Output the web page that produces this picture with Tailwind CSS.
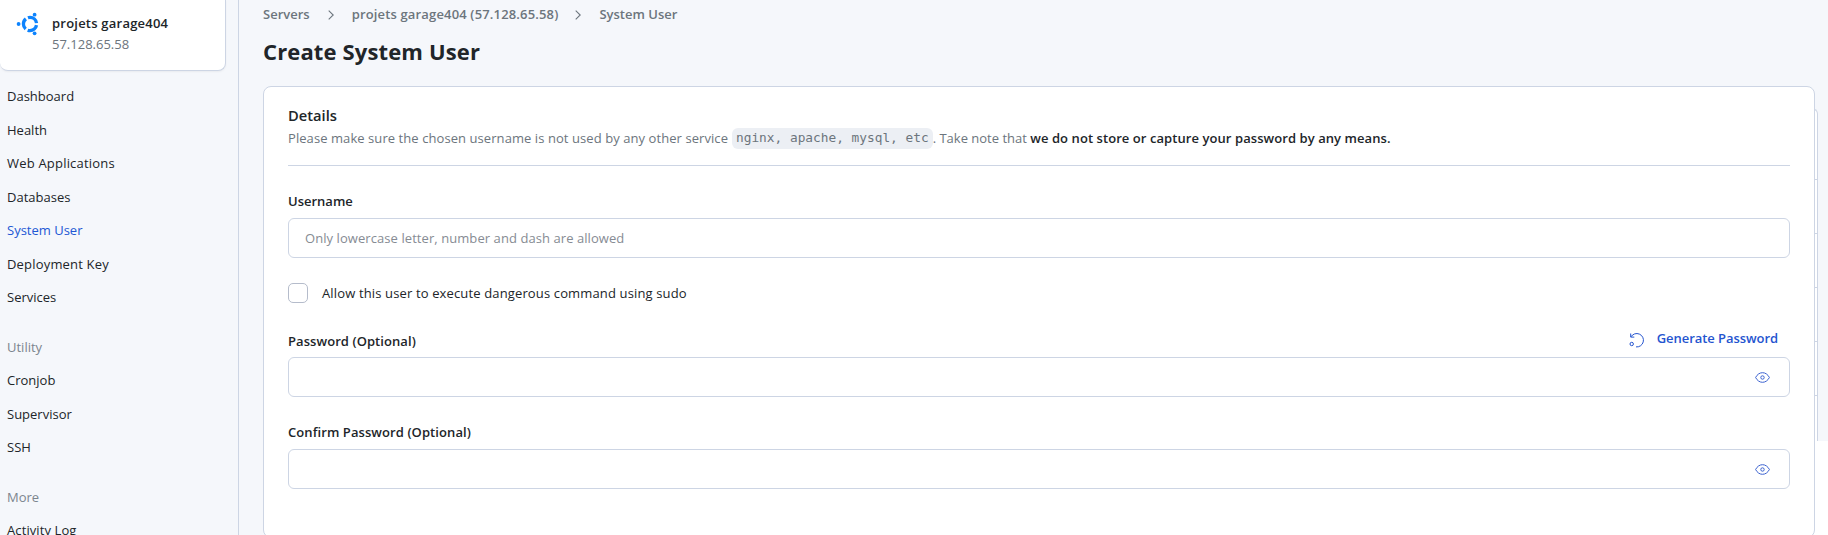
<!DOCTYPE html>
<html lang="en">
<head>
<meta charset="utf-8">
<title>Create System User</title>
<script src="https://cdn.jsdelivr.net/npm/@tailwindcss/browser@4"></script>
</head>
<body class="relative flex h-[535px] overflow-hidden bg-[#f5f7fb] font-['Open_Sans',sans-serif] text-[13px] leading-5 text-[#212529]">
  <!-- Sidebar -->
  <aside class="h-full w-[239px] shrink-0 border-r border-[#cdd5e4]">
    <div class="flex h-[71px] w-[226px] rounded-b-lg border-r border-b border-[#cdd5e4] bg-white pt-3 pl-4 shadow-xs">
      <svg class="h-6 w-6 shrink-0 text-[#0d83fd]" viewBox="0 0 24 24" fill="none" stroke="currentColor">
        <circle cx="14" cy="12" r="6.6" stroke-width="3.3" stroke-dasharray="11.5 2.323" stroke-dashoffset="-1.16"/>
        <g fill="currentColor" stroke="none">
          <circle cx="2.6" cy="12" r="1.9"/>
          <circle cx="18.6" cy="2.7" r="1.9"/>
          <circle cx="18.6" cy="21.3" r="1.9"/>
        </g>
      </svg>
      <div class="pt-px pl-3">
        <p class="font-semibold tracking-[0.22px]">projets garage404</p>
        <p class="pt-px text-[#6c757d]">57.128.65.58</p>
      </div>
    </div>
    <nav class="flex flex-col pt-[9px] pl-[7px] leading-[33.5px]">
      <a>Dashboard</a>
      <a>Health</a>
      <a class="tracking-[0.2px]">Web Applications</a>
      <a>Databases</a>
      <a class="text-[#2257d4]">System User</a>
      <a class="tracking-[0.18px]">Deployment Key</a>
      <a>Services</a>
      <h2 class="pt-4 text-[#7c858e]">Utility</h2>
      <a>Cronjob</a>
      <a>Supervisor</a>
      <a>SSH</a>
      <h2 class="pt-4 text-[#7c858e]">More</h2>
      <a class="tracking-[0.1px]">Activity Log</a>
    </nav>
  </aside>

  <!-- Panel showing behind the form's right edge -->
  <div class="absolute top-[108px] left-[1700px] flex h-[333px] w-[118px] flex-col rounded-tr-md border-t border-r border-[#cdd5e4] bg-white">
    <div class="h-[71px] border-b border-[#cdd5e4]"></div>
    <div class="h-[54px] border-b border-[#cdd5e4]"></div>
    <div class="h-[54px] border-b border-[#cdd5e4]"></div>
    <div class="h-[54px] border-b border-[#cdd5e4]"></div>
    <div class="h-[54px] border-b border-[#cdd5e4]"></div>
  </div>
  <div class="absolute top-[441px] left-[1800px] h-[94px] w-7 bg-white"></div>

  <main class="relative ml-6 w-[1552px] shrink-0">
    <div class="flex h-7 items-center font-semibold text-[#6c757d]">
      <span>Servers</span>
      <svg class="mx-[18px] mt-0.5 h-2.5 w-1.5" viewBox="0 0 6 10" fill="none" stroke="currentColor" stroke-width="1.1"><path d="M.7.7 5.2 5 .7 9.3"/></svg>
      <span class="tracking-[0.16px]">projets garage404 (57.128.65.58)</span>
      <svg class="mr-[18px] ml-[17px] mt-0.5 h-2.5 w-1.5" viewBox="0 0 6 10" fill="none" stroke="currentColor" stroke-width="1.1"><path d="M.7.7 5.2 5 .7 9.3"/></svg>
      <span>System User</span>
    </div>
    <h1 class="h-[58px] pt-[7px] text-[22px] leading-8 font-bold tracking-[0.14px]">Create System User</h1>

    <section class="h-[452px] rounded-lg border border-[#cdd5e4] bg-white px-6">
      <header class="h-[79px] border-b border-[#cdd5e4] pt-[17px]">
        <h2 class="text-[14.7px] leading-[23px] font-semibold">Details</h2>
        <p class="flex items-center leading-[22px] text-[#6c757d]">
          <span class="tracking-[0.07px]">Please make sure the chosen username is not used by any other service</span>
          <code class="ml-1 h-[21px] rounded-md bg-[#eceff4] px-1 font-['DejaVu_Sans_Mono',monospace] text-[12.8px] leading-5">nginx, apache, mysql, etc</code>
          <span class="whitespace-pre">. Take note that </span>
          <strong class="font-semibold tracking-[0.07px] text-[#212529]">we do not store or capture your password by any means.</strong>
        </p>
      </header>

      <label class="mt-[25px] block font-semibold">Username</label>
      <input type="text" placeholder="Only lowercase letter, number and dash are allowed" class="mt-[7px] block h-10 w-full rounded-md border border-[#cdd5e4] px-4 tracking-[0.07px] placeholder:text-[#868b93]">

      <label class="mt-[25px] flex h-5 items-center">
        <span class="h-5 w-5 rounded-[5px] border border-[#b5bccb]"></span>
        <span class="pl-3.5 tracking-[0.14px]">Allow this user to execute dangerous command using sudo</span>
      </label>

      <div class="mt-[21px] flex h-[33px] justify-between">
        <label class="pt-[7px] font-semibold tracking-[0.07px]">Password (Optional)</label>
        <button class="flex h-7 items-center pr-3 font-semibold text-[#2454cf]">
          <svg class="mt-[3px] mr-3 h-4 w-4" viewBox="0 0 16 16" fill="none" stroke="currentColor" stroke-width="1"><path d="M1.700 1.500v3.600h3.600M2 4.800A6.700 6.700 0 1 1 7 14.900"/><circle cx="2.700" cy="12" r="1.700"/></svg>
          <span class="tracking-[-0.06px]">Generate Password</span>
        </button>
      </div>
      <div class="flex h-10 items-center justify-end rounded-md border border-[#cdd5e4] pr-[19px]">
        <svg class="h-[11px] w-[15px] text-[#3b62d0]" viewBox="0 0 15 11" fill="none" stroke="currentColor"><path d="M.6 5.5C2.2 2.4 4.7.7 7.5.7s5.300 1.700 6.900 4.800c-1.600 3.100-4.100 4.800-6.900 4.800S2.200 8.600.6 5.500Z"/><circle cx="7.5" cy="5.500" r="1.700"/></svg>
      </div>

      <label class="mt-[25px] block font-semibold tracking-[0.085px]">Confirm Password (Optional)</label>
      <div class="mt-[7px] flex h-10 items-center justify-end rounded-md border border-[#cdd5e4] pr-[19px]">
        <svg class="h-[11px] w-[15px] text-[#3b62d0]" viewBox="0 0 15 11" fill="none" stroke="currentColor"><path d="M.6 5.5C2.2 2.4 4.7.7 7.5.7s5.300 1.700 6.900 4.800c-1.600 3.100-4.100 4.800-6.900 4.800S2.200 8.600.6 5.500Z"/><circle cx="7.5" cy="5.500" r="1.700"/></svg>
      </div>
    </section>
  </main>
</body>
</html>
